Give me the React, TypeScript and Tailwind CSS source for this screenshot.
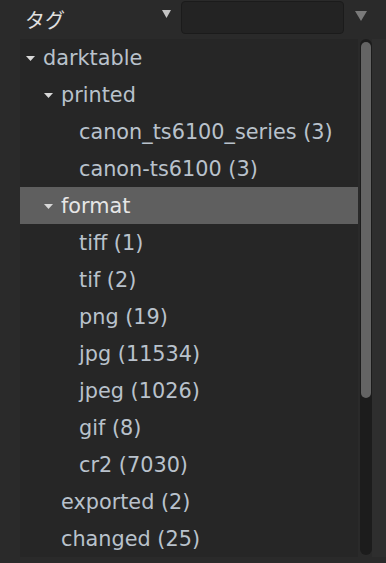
import React from 'react';

type Node = { label: string; level: number; open?: boolean; selected?: boolean };

const rows: Node[] = [
  { label: 'darktable', level: 0, open: true },
  { label: 'printed', level: 1, open: true },
  { label: 'canon_ts6100_series (3)', level: 2 },
  { label: 'canon-ts6100 (3)', level: 2 },
  { label: 'format', level: 1, open: true, selected: true },
  { label: 'tiff (1)', level: 2 },
  { label: 'tif (2)', level: 2 },
  { label: 'png (19)', level: 2 },
  { label: 'jpg (11534)', level: 2 },
  { label: 'jpeg (1026)', level: 2 },
  { label: 'gif (8)', level: 2 },
  { label: 'cr2 (7030)', level: 2 },
  { label: 'exported (2)', level: 1 },
  { label: 'changed (25)', level: 1 },
];

const indent = ['pl-[6px]', 'pl-[24px]', 'pl-[42px]'];

function Expander() {
  return (
    <svg width="9" height="5" viewBox="0 0 9 5" className="shrink-0">
      <path d="M0 0 L9 0 L4.5 5 Z" fill="#d8d8d8" />
    </svg>
  );
}

export default function App() {
  return (
    <div className="w-[386px] h-[563px] bg-[#2a2a2a] font-['DejaVu_Sans',sans-serif] flex flex-col overflow-hidden">
      {/* header */}
      <div className="h-[39px] flex items-start">
        <div className="pl-[25px] pt-[6px] w-[162px] text-[20px] text-[#e0e0e0] font-['Noto_Sans_CJK_JP',sans-serif] leading-[28px]">
          タグ
        </div>
        <div className="pt-[10px] w-[19px]">
          <svg width="9" height="8" viewBox="0 0 9 8">
            <path d="M0 0 L9 0 L4.5 8 Z" fill="#c4c4c4" />
          </svg>
        </div>
        <div className="mt-[1px] w-[163px] h-[33px] rounded-[4px] bg-[#232323] border border-[#1b1b1b]" />
        <div className="pl-[11px] pt-[11px]">
          <svg width="12" height="10" viewBox="0 0 12 10">
            <path d="M0 0 L12 0 L6 10 Z" fill="#7a7a7a" />
          </svg>
        </div>
      </div>

      {/* tree + scrollbar */}
      <div className="flex h-[518px]">
        <div className="w-[20px]" />
        <div className="w-[338px] bg-[#262626] flex flex-col">
          {rows.map((r, i) => (
            <div
              key={i}
              className={`h-[37px] shrink-0 flex items-center pt-[2px] ${indent[r.level]} ${
                r.selected ? 'bg-[#5f5f5f] text-[#e6e6e6]' : 'text-[#b9c2cc]'
              }`}
            >
              <div className="w-[17px] flex items-center">{r.open && <Expander />}</div>
              <span className="text-[20.8px] leading-none whitespace-nowrap">{r.label}</span>
            </div>
          ))}
        </div>
        <div className="w-[2px]" />
        <div className="w-[12px] h-[516px] bg-[#1c1c1c] rounded-full flex flex-col pt-[3px] px-[1px]">
          <div className="h-[356px] w-full rounded-full bg-[#646464]" />
        </div>
        <div className="flex-1 bg-[#2e2e2e]" />
      </div>
    </div>
  );
}
